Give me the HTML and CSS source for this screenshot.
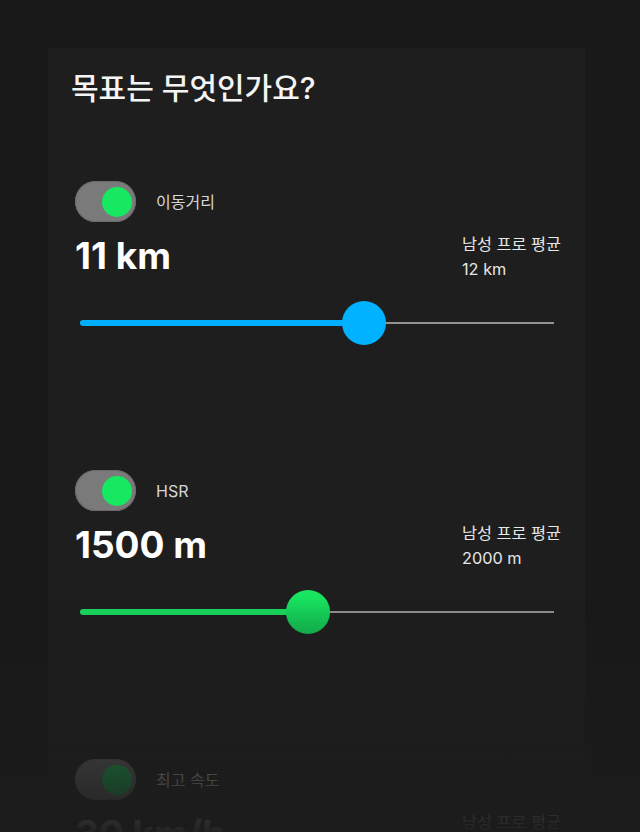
FILE: index.html
```html
<!DOCTYPE html>
<html lang="ko">
<head>
<meta charset="utf-8">
<link rel="stylesheet" href="styles.css">
</head>
<body>
<main class="card">
  <h1 class="title">목표는 무엇인가요?</h1>

  <section class="goal">
    <div class="toggle-row">
      <span class="toggle on"><span class="knob"></span></span>
      <span class="label">이동거리</span>
    </div>
    <div class="value-row">
      <div class="value">11 km</div>
      <div class="avg">
        <div>남성 프로 평균</div>
        <div>12 km</div>
      </div>
    </div>
    <div class="slider blue">
      <div class="rail"></div>
      <div class="fill" style="width: 284px"></div>
      <div class="thumb" style="left: 284px"></div>
    </div>
  </section>

  <section class="goal">
    <div class="toggle-row">
      <span class="toggle on"><span class="knob"></span></span>
      <span class="label">HSR</span>
    </div>
    <div class="value-row">
      <div class="value">1500 m</div>
      <div class="avg">
        <div>남성 프로 평균</div>
        <div>2000 m</div>
      </div>
    </div>
    <div class="slider green">
      <div class="rail"></div>
      <div class="fill" style="width: 228px"></div>
      <div class="thumb" style="left: 228px"></div>
    </div>
  </section>

  <section class="goal">
    <div class="toggle-row">
      <span class="toggle on"><span class="knob"></span></span>
      <span class="label">최고 속도</span>
    </div>
    <div class="value-row">
      <div class="value">30 km/h</div>
      <div class="avg">
        <div>남성 프로 평균</div>
        <div>32 km/h</div>
      </div>
    </div>
    <div class="slider red">
      <div class="rail"></div>
      <div class="fill" style="width: 250px"></div>
      <div class="thumb" style="left: 250px"></div>
    </div>
  </section>
</main>
<div class="fade"></div>
</body>
</html>
```

FILE: styles.css
```css
html, body {
  margin: 0;
  padding: 0;
  height: 100%;
  overflow: hidden;
  background: #191919;
}

body {
  font-family: Inter, "Noto Sans CJK KR", sans-serif;
  color: #ffffff;
  padding: 48px 0 0 48px;
  box-sizing: border-box;
}

.card {
  width: 537px;
  min-height: 1100px;
  background: #1e1e1e;
  padding: 24px 24px 0 24px;
  box-sizing: border-box;
}

.title {
  margin: 0 0 0 -1px;
  font-size: 30px;
  line-height: 32px;
  font-weight: 500;
  color: #f4f4f4;
  letter-spacing: 0;
}

.goal {
  padding-left: 3px;
  margin-top: 77px;
}

.goal + .goal {
  margin-top: 125px;
}

.toggle-row {
  display: flex;
  align-items: center;
  gap: 20px;
  height: 41px;
}

.toggle {
  width: 61px;
  height: 41px;
  border-radius: 21px;
  background: #7a7a7a;
  box-shadow: inset 0 0 0 1px #6a6a6a;
  display: flex;
  align-items: center;
  justify-content: flex-end;
  padding-right: 4px;
  box-sizing: border-box;
}

.knob {
  width: 30px;
  height: 30px;
  border-radius: 50%;
  background: #17e861;
}

.label {
  font-size: 16px;
  color: #d6d6d6;
  line-height: 20px;
}

.value-row {
  display: flex;
  justify-content: space-between;
  margin-top: 13px;
  height: 50px;
}

.value {
  font-size: 37px;
  line-height: 40px;
  font-weight: 700;
  letter-spacing: 0;
  color: #ffffff;
  margin-top: 1px;
}

.avg {
  width: 99px;
  font-size: 16.3px;
  line-height: 25px;
  color: #e6e6e6;
  margin-top: -3px;
  white-space: nowrap;
}

.slider {
  position: relative;
  margin: 16px 0 0 5px;
  width: 474px;
  height: 44px;
}

.rail {
  position: absolute;
  left: 0;
  right: 0;
  top: 21px;
  height: 2px;
  background: #a8a8a8;
  opacity: 0.85;
}

.fill {
  position: absolute;
  left: 0;
  top: 19px;
  height: 6px;
  border-radius: 3px;
}

.thumb {
  position: absolute;
  top: 0;
  width: 44px;
  height: 44px;
  margin-left: -22px;
  border-radius: 50%;
}

.blue .fill { background: #00b0ff; }
.blue .thumb { background: #00b2ff; }

.green .fill { background: #18dc5e; }
.green .thumb { background: linear-gradient(#19e862, #12c653); }

.red .fill { background: #ff5a3c; }
.red .thumb { background: #ff5a3c; }

.fade {
  position: fixed;
  left: 0;
  right: 0;
  bottom: 0;
  height: 232px;
  pointer-events: none;
  background: linear-gradient(to bottom,
    rgba(28, 28, 28, 0) 0%,
    rgba(28, 28, 28, 0.35) 30%,
    rgba(28, 28, 28, 0.72) 68%,
    rgba(28, 28, 28, 0.97) 100%);
}
```
